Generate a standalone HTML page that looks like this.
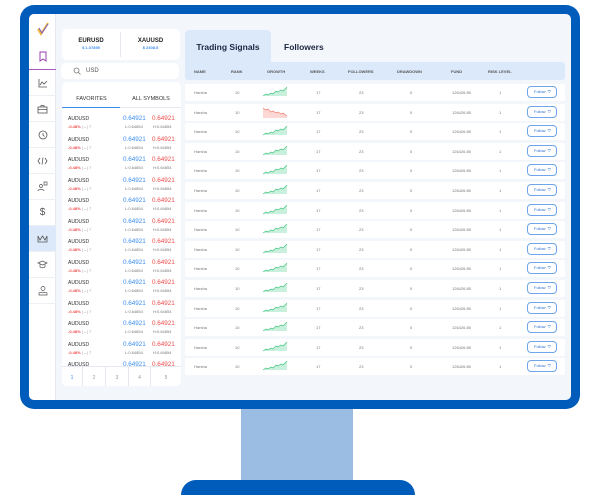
<!DOCTYPE html>
<html><head><meta charset="utf-8"><style>
*{margin:0;padding:0;box-sizing:border-box}
html,body{width:600px;height:495px;overflow:hidden}
body{background:#fff;position:relative;font-family:"Liberation Sans",sans-serif}
.a{position:absolute}
.frame{left:20px;top:5px;width:560px;height:404px;background:#005cbb;border-radius:14px}
.screen{left:29px;top:14px;width:542px;height:386px;background:#f3f6fb;border-radius:5px;overflow:hidden}
.side{left:0;top:0;width:27px;height:386px;background:#fff;border-right:1px solid #e6e9ef}
.si{position:absolute;left:0;width:27px;height:26px;border-bottom:1px solid #eceff3;display:flex;align-items:center;justify-content:center}
.card{background:#fff;border-radius:5px}
.sym{position:absolute;left:0;width:119px;height:20px;font-size:5px}
.sym .n{position:absolute;left:6px;top:0;font-size:5px;color:#333}
.sym .c{position:absolute;left:6px;top:8px;color:#f04a4a;font-weight:bold;font-size:4px}
.sym .c span{color:#999;font-weight:normal}
.sym .b{position:absolute;left:61px;top:-1px;color:#3b8df0;font-size:6.3px}
.sym .r{position:absolute;left:90px;top:-1px;color:#f04a4a;font-size:6.3px}
.sym .l{position:absolute;left:63px;top:8px;color:#777;font-size:4px}
.sym .h{position:absolute;left:91px;top:8px;color:#777;font-size:4px}
.row{position:absolute;left:156px;width:380px;height:17px;background:#fff;border-radius:2px;font-size:4px;color:#777}
.row span{position:absolute;top:6px}
.hd span{position:absolute;top:7px;font-size:4px;color:#555;font-weight:bold}
.btn{position:absolute;left:342px;top:2px;width:30px;height:12px;border:1px solid #6fa5ec;border-radius:4px;color:#2f6fd0;font-size:4px;line-height:10px;padding-left:6px}
.pg{position:absolute;top:0;width:24px;height:22px;border-right:1px solid #e3e6ec;font-size:5px;color:#999;text-align:center;line-height:22px}
</style></head><body>
<div class="a frame"></div>
<div class="a" style="left:241px;top:409px;width:112px;height:86px;background:#9bbde3"></div>
<div class="a" style="left:181px;top:480px;width:234px;height:15px;background:#005cbb;border-radius:18px 18px 0 0"></div>
<div class="a screen">
 <div class="a side">
  <div class="si" style="top:1px;height:28px;border:none"><svg width="14" height="14" viewBox="0 0 14 14"><path d="M2 7l3 5 7-11" stroke="#f2b233" stroke-width="2" fill="none"/><path d="M3 6l3 5 6-9" stroke="#7a5cc8" stroke-width="1" fill="none"/></svg></div>
  <div class="si" style="top:30px;border-bottom:1px solid #a55fc0"><svg width="10" height="11"><path d="M2 1h6v9l-3-2-3 2z" stroke="#9b3fb0" fill="none"/></svg></div>
  <div class="si" style="top:56px"><svg width="10" height="10"><path d="M1 1v8h8M2 7l2-3 2 2 3-3" stroke="#555" fill="none" stroke-width=".8"/></svg></div>
  <div class="si" style="top:82px"><svg width="11" height="10"><rect x="1" y="3" width="9" height="6" stroke="#555" fill="none" stroke-width=".8"/><path d="M4 3V1.5h3V3M1 5.5h9" stroke="#555" fill="none" stroke-width=".8"/></svg></div>
  <div class="si" style="top:108px"><svg width="10" height="10"><circle cx="5" cy="5" r="4" stroke="#555" fill="none" stroke-width=".8"/><path d="M5 3v2l1.5 1.5" stroke="#555" fill="none" stroke-width=".8"/></svg></div>
  <div class="si" style="top:134px"><svg width="11" height="10"><path d="M3 2L1 5l2 3M8 2l2 3-2 3M6 1.5L5 8.5" stroke="#555" fill="none" stroke-width=".8"/></svg></div>
  <div class="si" style="top:160px"><svg width="11" height="11"><circle cx="4" cy="5" r="1.5" stroke="#555" fill="none" stroke-width=".7"/><path d="M1 10c0-2 6-2 6 0M7 1h3v3H7z" stroke="#555" fill="none" stroke-width=".7"/></svg></div>
  <div class="si" style="top:186px;color:#555;font-size:10px">$</div>
  <div class="si" style="top:212px;background:#dbe9fb"><svg width="11" height="9"><path d="M1 2l2 4 2.5-4 2.5 4 2-4v6H1z" stroke="#555" fill="none" stroke-width=".8"/></svg></div>
  <div class="si" style="top:238px"><svg width="11" height="10"><path d="M1 3l4.5-2 4.5 2-4.5 2zM3 4v3c1 1 4 1 5 0V4" stroke="#555" fill="none" stroke-width=".7"/></svg></div>
  <div class="si" style="top:264px"><svg width="10" height="11"><circle cx="5" cy="3.5" r="2" stroke="#555" fill="none" stroke-width=".7"/><path d="M1 10V8c0-1 8-1 8 0v2z" stroke="#555" fill="none" stroke-width=".7"/></svg></div>
 </div>
 <div class="a card" style="left:33px;top:15px;width:118px;height:31px">
  <div class="a" style="left:58px;top:3px;width:1px;height:25px;background:#e6e9ef"></div>
  <div class="a" style="left:0;top:9px;width:58px;text-align:center;font-size:6px;font-weight:bold;color:#222">EURUSD<div style="font-size:4px;color:#3b8df0;margin-top:1px">$ 1.07895</div></div>
  <div class="a" style="left:59px;top:9px;width:59px;text-align:center;font-size:6px;font-weight:bold;color:#222">XAUUSD<div style="font-size:4px;color:#3b8df0;margin-top:1px">$ 2308.5</div></div>
 </div>
 <div class="a card" style="left:32px;top:49px;width:118px;height:16px;font-size:6px;color:#555">
  <svg class="a" style="left:12px;top:4px" width="8" height="8"><circle cx="3.5" cy="3.5" r="2.5" stroke="#777" fill="none" stroke-width=".8"/><path d="M5.5 5.5l2 2" stroke="#777" stroke-width=".8"/></svg>
  <span class="a" style="left:25px;top:5px">USD</span>
 </div>
 <div class="a card" style="left:33px;top:68px;width:119px;height:304px;overflow:hidden">
  <div class="a" style="left:0;top:14px;width:59px;text-align:center;font-size:5.5px;color:#333">FAVORITES</div>
  <div class="a" style="left:59px;top:14px;width:60px;text-align:center;font-size:5.5px;color:#333">ALL SYMBOLS</div>
  <div class="a" style="left:0;top:25px;width:119px;height:1px;background:#e6e9ef"></div>
  <div class="a" style="left:0;top:25px;width:58px;height:1px;background:#3b8df0"></div>
  <div class="a" id="syms" style="left:0;top:30px;width:119px;height:254px;overflow:hidden"></div>
  <div class="a" style="left:0;top:284px;width:119px;height:20px;border-top:1px solid #e6e9ef">
   <div class="pg" style="left:0;width:21px;color:#3b8df0">1</div><div class="pg" style="left:21px;width:23px">2</div><div class="pg" style="left:44px;width:23px">3</div><div class="pg" style="left:67px;width:22px">4</div><div class="pg" style="left:89px;width:30px;border:none">5</div>
  </div>
 </div>
 <div class="a" style="left:156px;top:16px;width:86px;height:34px;background:#dbe9fb;border-radius:4px 4px 0 0"></div>
 <div class="a" style="left:156px;top:28px;width:86px;text-align:center;font-size:8.5px;font-weight:bold;color:#1d2540">Trading Signals</div>
 <div class="a" style="left:255px;top:28px;font-size:8.5px;font-weight:bold;color:#1d2540">Followers</div>
 <div class="a hd" style="left:156px;top:48px;width:380px;height:18px;background:#dbe9fb;border-radius:0 3px 3px 3px">
  <span style="left:9px">NAME</span><span style="left:46px">RANK</span><span style="left:82px">GROWTH</span><span style="left:125px">WEEKS</span><span style="left:163px">FOLLOWERS</span><span style="left:212px">DRAWDOWN</span><span style="left:266px">FUND</span><span style="left:303px">RISK LEVEL</span>
 </div>
 <div id="rows"></div>
</div>
<svg width="0" height="0" style="position:absolute"><defs>
<g id="gu"><path d="M0 9l3-2 2 1 3-2 2 1 3-3 2 1 3-2 2 1 4-4v9H0z" fill="#c9f0dc"/><path d="M0 9l3-2 2 1 3-2 2 1 3-3 2 1 3-2 2 1 4-4" stroke="#3cc47c" stroke-width=".7" fill="none"/></g>
<g id="gd"><path d="M0 1l3 2 2-1 3 3 2-1 3 2 2-1 3 2 2-1 4 3v2H0z" fill="#fbd8d3"/><path d="M0 1l3 2 2-1 3 3 2-1 3 2 2-1 3 2 2-1 4 3" stroke="#ef7b6d" stroke-width=".7" fill="none"/></g>
</defs></svg>
<script>
var h='';for(var i=0;i<15;i++){var t=70+i*19.6;var g=i==1?'gd':'gu';
h+='<div class="row" style="top:'+t+'px"><span style="left:9px">Harsha</span><span style="left:50px">10</span><svg style="position:absolute;left:78px;top:3px" width="28" height="11"><use href="#'+g+'"/></svg><span style="left:131px">17</span><span style="left:174px">23</span><span style="left:225px">0</span><span style="left:267px">126426.85</span><span style="left:314px">1</span><div class="btn">Follow &nbsp;⛉</div></div>';}
document.getElementById('rows').innerHTML=h;
var s='';for(var j=0;j<13;j++){s+='<div class="sym" style="top:'+(4+j*20.5)+'px"><div class="n">AUDUSD</div><div class="c">-0.48% <span>|↔| 7</span></div><div class="b">0.64921</div><div class="r">0.64921</div><div class="l">L:0.64854</div><div class="h">H:0.64854</div></div>';}
document.getElementById('syms').innerHTML=s;
</script>
</body>
</html>
